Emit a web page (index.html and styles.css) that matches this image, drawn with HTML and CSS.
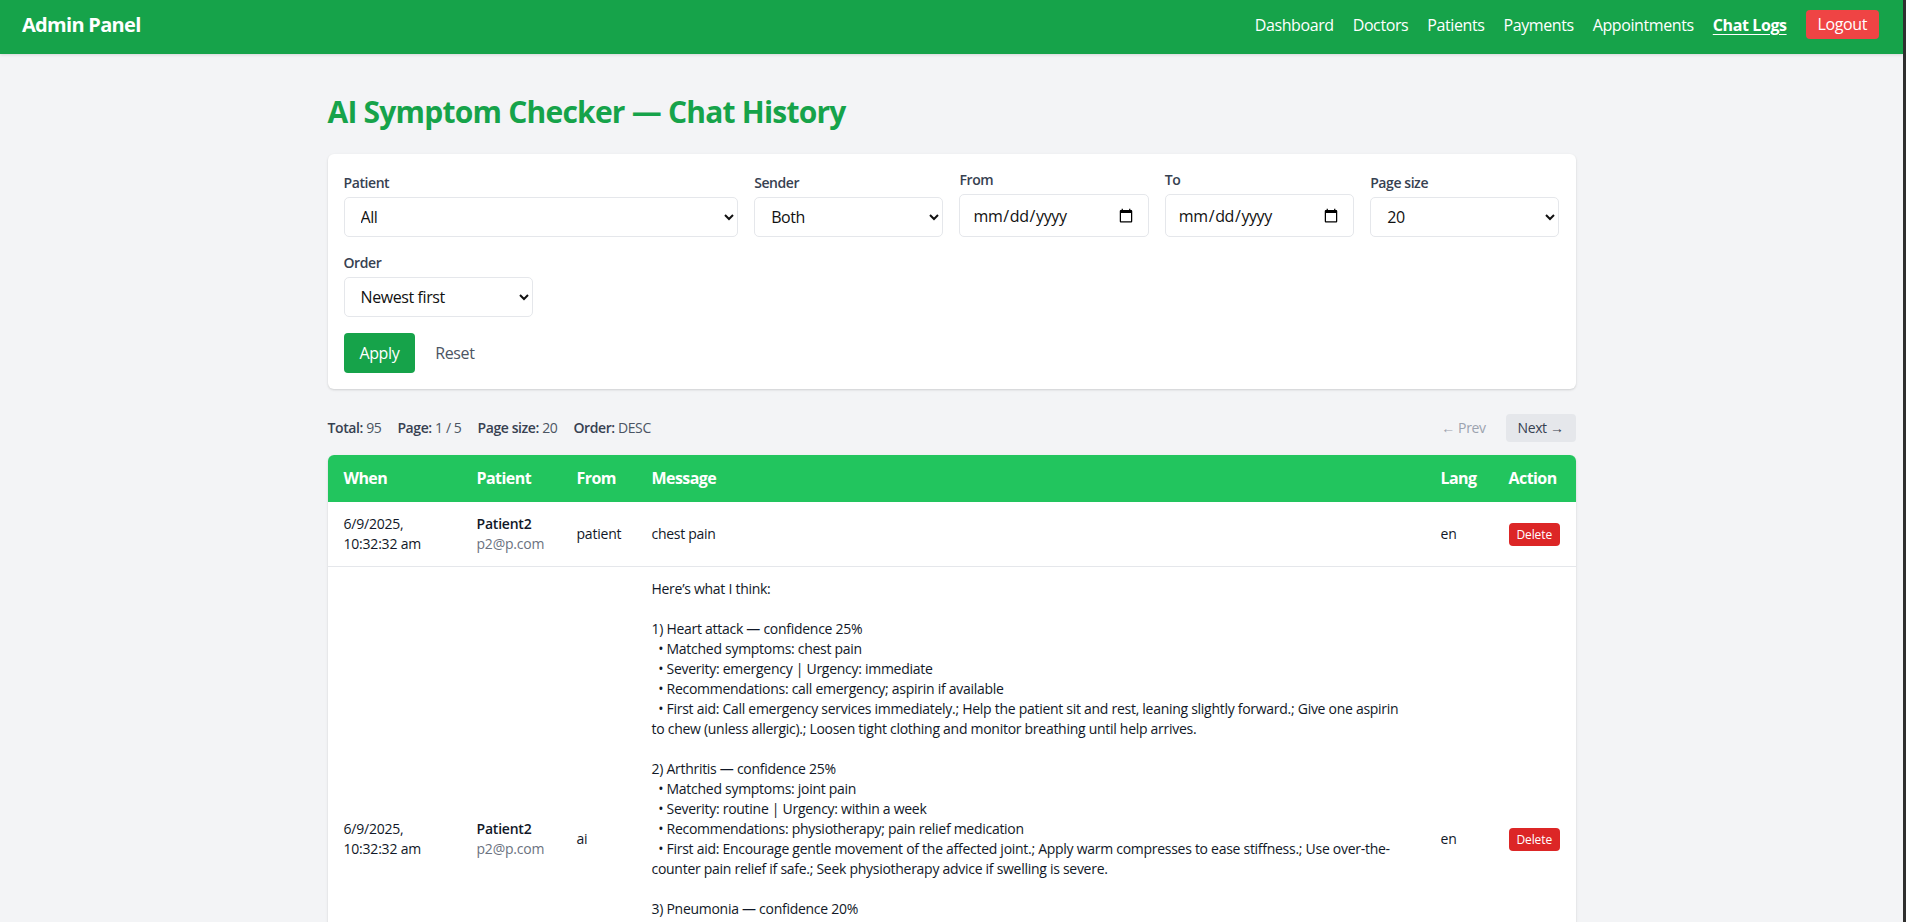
FILE: index.html
```html
<!DOCTYPE html>
<html lang="en">
<head>
<meta charset="utf-8">
<title>Admin Panel — Chat Logs</title>
<link rel="stylesheet" href="styles.css">
</head>
<body>
<header class="topbar">
  <div class="brand">Admin Panel</div>
  <nav class="nav">
    <a href="#" class="nav-link">Dashboard</a>
    <a href="#" class="nav-link">Doctors</a>
    <a href="#" class="nav-link">Patients</a>
    <a href="#" class="nav-link">Payments</a>
    <a href="#" class="nav-link">Appointments</a>
    <a href="#" class="nav-link active">Chat Logs</a>
    <button class="logout" type="button">Logout</button>
  </nav>
</header>

<main class="container">
  <h1 class="title">AI Symptom Checker — Chat History</h1>

  <form class="card filters">
    <div class="filter-grid">
      <div class="field span-4">
        <label class="label">Patient</label>
        <select class="control select"><option>All</option></select>
      </div>
      <div class="field span-2">
        <label class="label">Sender</label>
        <select class="control select"><option>Both</option></select>
      </div>
      <div class="field span-2">
        <label class="label">From</label>
        <input class="control date" type="date">
      </div>
      <div class="field span-2">
        <label class="label">To</label>
        <input class="control date" type="date">
      </div>
      <div class="field span-2">
        <label class="label">Page size</label>
        <select class="control select"><option>20</option></select>
      </div>
      <div class="field span-2">
        <label class="label">Order</label>
        <select class="control select"><option>Newest first</option></select>
      </div>
    </div>
    <div class="actions">
      <button class="btn-apply" type="button">Apply</button>
      <button class="btn-reset" type="button">Reset</button>
    </div>
  </form>

  <div class="toolbar">
    <div class="stats">
      <span><b>Total:</b> 95</span>
      <span><b>Page:</b> 1 / 5</span>
      <span><b>Page size:</b> 20</span>
      <span><b>Order:</b> DESC</span>
    </div>
    <div class="pager">
      <button class="pg-btn disabled" type="button">← Prev</button>
      <button class="pg-btn next" type="button">Next →</button>
    </div>
  </div>

  <div class="table-wrap">
    <table class="logs">
      <colgroup>
        <col class="c-when"><col class="c-patient"><col class="c-from"><col class="c-msg"><col class="c-lang"><col class="c-action">
      </colgroup>
      <thead>
        <tr><th>When</th><th>Patient</th><th>From</th><th>Message</th><th>Lang</th><th>Action</th></tr>
      </thead>
      <tbody>
        <tr>
          <td>6/9/2025,<br>10:32:32 am</td>
          <td><div class="p-name">Patient2</div><div class="p-mail">p2@p.com</div></td>
          <td>patient</td>
          <td><div class="msg">chest pain</div></td>
          <td>en</td>
          <td><button class="del" type="button">Delete</button></td>
        </tr>
        <tr>
          <td>6/9/2025,<br>10:32:32 am</td>
          <td><div class="p-name">Patient2</div><div class="p-mail">p2@p.com</div></td>
          <td>ai</td>
          <td><div class="msg">Here’s what I think:

1) Heart attack — confidence 25%
  • Matched symptoms: chest pain
  • Severity: emergency | Urgency: immediate
  • Recommendations: call emergency; aspirin if available
  • First aid: Call emergency services immediately.; Help the patient sit and rest, leaning slightly forward.; Give one aspirin
to chew (unless allergic).; Loosen tight clothing and monitor breathing until help arrives.

2) Arthritis — confidence 25%
  • Matched symptoms: joint pain
  • Severity: routine | Urgency: within a week
  • Recommendations: physiotherapy; pain relief medication
  • First aid: Encourage gentle movement of the affected joint.; Apply warm compresses to ease stiffness.; Use over-the-
counter pain relief if safe.; Seek physiotherapy advice if swelling is severe.

3) Pneumonia — confidence 20%
  • Matched symptoms: chest pain
  • Severity: urgent | Urgency: within 24 hours
  • Recommendations: see a doctor; chest x-ray
  • First aid: Keep the patient upright and rested.; Offer fluids if able to swallow.; Seek medical care promptly if
breathing becomes difficult.

Tip: share more symptoms (duration, fever, cough) for a better match.

This is not a medical diagnosis. If symptoms are severe, seek emergency care.</div></td>
          <td>en</td>
          <td><button class="del" type="button">Delete</button></td>
        </tr>
      </tbody>
    </table>
  </div>
</main>
</body>
</html>
```

FILE: styles.css
```css
* { box-sizing: border-box; }

html { background: #2f2f2f; }

body {
  margin: 0 3px 0 0;
  background: #f3f4f6;
  font-family: "Open Sans", "Noto Sans", "Liberation Sans", sans-serif;
  letter-spacing: -0.025em;
  color: #111827;
  min-height: 922px;
}

button, input, select {
  font-family: inherit;
  letter-spacing: inherit;
}

/* ---------- top bar ---------- */
.topbar {
  display: flex;
  justify-content: space-between;
  align-items: center;
  background: #16a34a;
  color: #fff;
  padding: 10px 24px 15px 22px;
  box-shadow: 0 1px 3px rgba(0, 0, 0, 0.12);
}

.brand {
  font-size: 20px;
  line-height: 28px;
  font-weight: 700;
  letter-spacing: -0.035em;
}

.nav {
  display: flex;
  align-items: center;
  gap: 19px;
}

.nav-link {
  color: #fff;
  text-decoration: none;
  font-size: 16px;
  line-height: 24px;
}

.nav-link.active {
  font-weight: 700;
  text-decoration: underline;
  text-underline-offset: 3px;
}

.logout {
  background: #ef4444;
  color: #fff;
  border: 0;
  border-radius: 4px;
  font-size: 16px;
  line-height: 25px;
  padding: 2px 12px;
}

/* ---------- main ---------- */
.container {
  max-width: 1280px;
  margin: 0 auto;
  padding: 40px 16px 0;
}

.title {
  margin: 0 0 24px;
  color: #16a34a;
  font-size: 30px;
  line-height: 36px;
  font-weight: 700;
  letter-spacing: -0.026em;
}

.card {
  background: #fff;
  border-radius: 6px;
  box-shadow: 0 1px 3px rgba(0, 0, 0, 0.1), 0 1px 2px rgba(0, 0, 0, 0.06);
}

.filters {
  padding: 16px;
}

.filter-grid {
  display: grid;
  grid-template-columns: repeat(12, minmax(0, 1fr));
  gap: 16px;
  align-items: end;
}

.span-4 { grid-column: span 4; }
.span-2 { grid-column: span 2; }

.field {
  display: flex;
  flex-direction: column;
}

.label {
  font-size: 14px;
  line-height: 20px;
  font-weight: 600;
  color: #374151;
  margin-bottom: 4px;
  letter-spacing: -0.03em;
}

.control {
  width: 100%;
  border: 1px solid #e5e7eb;
  border-radius: 5px;
  background: #fff;
  color: #111;
  font-size: 16px;
  padding: 0 12px;
}

.select { height: 40px; }
.date { height: 43px; }

.actions {
  display: flex;
  align-items: center;
  gap: 8px;
  margin-top: 16px;
}

.btn-apply {
  background: #16a34a;
  color: #fff;
  border: 0;
  border-radius: 4px;
  font-size: 16px;
  line-height: 24px;
  padding: 8px 16px;
}

.btn-reset {
  background: transparent;
  color: #4b5563;
  border: 0;
  font-size: 16px;
  line-height: 24px;
  padding: 8px 12px;
}

/* ---------- toolbar ---------- */
.toolbar {
  display: flex;
  justify-content: space-between;
  align-items: center;
  margin: 25px 0 13px;
}

.stats {
  display: flex;
  gap: 16px;
  font-size: 14px;
  line-height: 20px;
  color: #4b5563;
}

.stats b {
  font-weight: 600;
  color: #374151;
}

.pager {
  display: flex;
  gap: 8px;
}

.pg-btn {
  border: 0;
  border-radius: 4px;
  font-size: 14px;
  line-height: 20px;
  padding: 4px 12px;
  background: transparent;
  color: #374151;
}

.pg-btn.disabled { color: #9ca3af; }
.pg-btn.next { background: #e5e7eb; }

/* ---------- table ---------- */
.table-wrap {
  background: #fff;
  border-radius: 6px;
  overflow: hidden;
  box-shadow: 0 1px 3px rgba(0, 0, 0, 0.1), 0 1px 2px rgba(0, 0, 0, 0.06);
}

.logs {
  width: 100%;
  border-collapse: collapse;
  table-layout: fixed;
}

.c-when { width: 133px; }
.c-patient { width: 100px; }
.c-from { width: 75px; }
.c-lang { width: 68px; }
.c-action { width: 83px; }

.logs thead tr {
  background: #22c55e;
  color: #fff;
}

.logs th {
  text-align: left;
  font-size: 16px;
  line-height: 23px;
  font-weight: 700;
  padding: 12px 16px;
  letter-spacing: -0.035em;
}

.logs td {
  font-size: 14px;
  line-height: 20px;
  padding: 12px 16px;
  vertical-align: middle;
  border-bottom: 1px solid #e5e7eb;
  color: #111827;
  letter-spacing: -0.015em;
}

.p-name { font-weight: 600; }
.p-mail { color: #6b7280; }

.msg {
  white-space: pre;
  letter-spacing: -0.02em;
}

.del {
  background: #dc2626;
  color: #fff;
  border: 0;
  border-radius: 4px;
  font-size: 12px;
  line-height: 15px;
  padding: 4px 8px;
  letter-spacing: -0.01em;
}
```
